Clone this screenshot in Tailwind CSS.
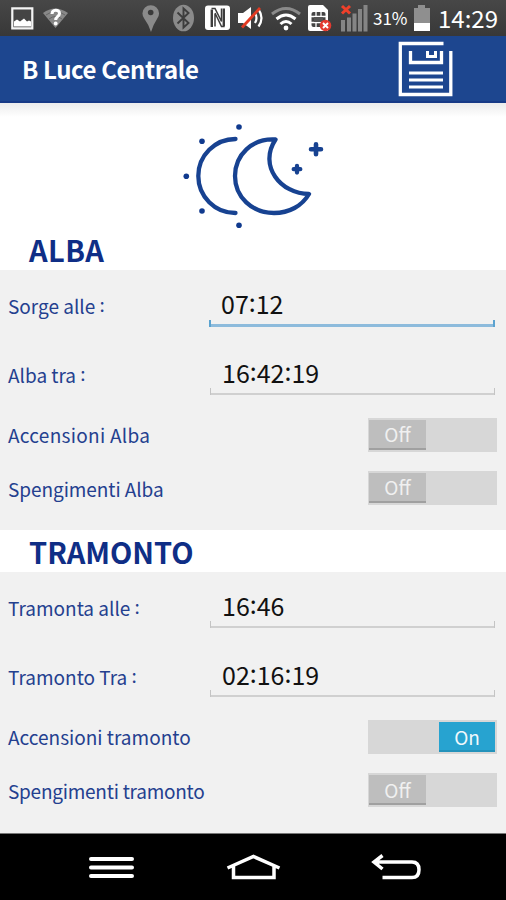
<!DOCTYPE html>
<html lang="it">
<head>
    <meta charset="UTF-8">
    <meta name="viewport" content="width=device-width, initial-scale=1.0">
    <title>B Luce Centrale</title>
    <script src="https://cdn.jsdelivr.net/npm/@tailwindcss/browser@4"></script>
</head>
<body class="flex flex-col w-[506px] h-[900px] overflow-hidden bg-[#f1f1f1] font-['Noto_Sans_CJK_SC','Noto_Sans',sans-serif] text-[#24408f]">

    <!-- Barra di stato -->
    <div class="flex items-center h-9 shrink-0 bg-linear-to-b from-[#474747] to-[#383838] text-white pl-[11px]">
        <svg class="w-[23px] h-9 shrink-0" viewBox="0 0 23 36">
            <path d="M1.3 8.3h20v20h-20z" fill="#444" stroke="#f4f4f4" stroke-width="2.2"/>
            <path d="M3 26.500v-5l3-2 3 2 4-3 3 3 2-1 2 1v5z" fill="#fff"/>
        </svg>
        <svg class="w-[25px] h-9 shrink-0 ml-[9px]" viewBox="0 0 25 36">
            <path d="M0 13Q12 4 25 13L12.500 28z" fill="#888"/>
            <path d="M3 15q9.500-7 19 0M6 19q6.500-5 13 0" fill="none" stroke="#666"/>
            <path d="M9 14c0-5 7.500-5 7.500-.5 0 3-3.800 3-3.800 6.500" fill="none" stroke="#fff" stroke-width="3"/>
            <circle cx="12.700" cy="23.500" r="1.900" fill="#fff"/>
        </svg>
        <svg class="w-[18px] h-9 shrink-0 ml-[74px]" viewBox="0 0 18 36">
            <path d="M9 32Q7 25 2.500 19A8.300 8.300 0 1 1 15 19Q11 25 9 32z" fill="#8a8a8a"/>
            <circle cx="8.700" cy="12.500" r="2.800" fill="#3a3a3a"/>
        </svg>
        <svg class="w-[23px] h-9 shrink-0 ml-3" viewBox="0 0 23 36">
            <ellipse cx="11.500" cy="18" rx="10.500" ry="13.300" fill="#8a8a8a"/>
            <path d="M5.500 12.500L16.500 23l-5 4.500v-19l5 4.500L5.500 23.500" fill="none" stroke="#3d3d3d" stroke-width="1.900"/>
        </svg>
        <svg class="w-[26px] h-9 shrink-0 ml-[10px]" viewBox="0 0 26 36">
            <rect x="0" y="5.500" width="25" height="24.500" rx="3" fill="#fff"/>
            <path d="M6.800 27V9.500M18.800 26V8.500" fill="none" stroke="#3d3d3d" stroke-width="2.400"/>
            <path d="M6.500 8.500h3.500l6.500 13V8.500M10 14v12.500M10 13l6.500 13.500h3.200" fill="none" stroke="#3d3d3d" stroke-width="1.500"/>
        </svg>
        <svg class="w-[28px] h-9 shrink-0 ml-[6px]" viewBox="0 0 28 36">
            <path d="M1 13h5l8-6v22l-8-6H1z" fill="#fff"/>
            <path d="M18 13q3 5 0 10M21.500 9.500q6 8.500 0 17" fill="none" stroke="#fff" stroke-width="2.200"/>
            <path d="M5 27.500L23 8" stroke="#e33a22" stroke-width="2.800"/>
        </svg>
        <svg class="w-[30px] h-9 shrink-0 ml-[6px]" viewBox="0 0 30 36" fill="none" stroke-width="3">
            <path d="M1 14q14-11 28 0" stroke="#8a8a8a"/>
            <path d="M5.500 19q9.500-8 19 0M9.500 24q5.500-5 11 0" stroke="#fff"/>
            <circle cx="15" cy="28" r="2.400" fill="#fff" stroke="none"/>
        </svg>
        <svg class="w-[24px] h-9 shrink-0 ml-[7px]" viewBox="0 0 24 36">
            <path d="M2 5h13l5 5v21H2q-2 0-2-2V7q0-2 2-2z" fill="#fff"/>
            <rect x="3.500" y="12" width="14" height="15" rx="2" fill="#444"/>
            <path d="M3 16.500h15M3 22.500h15M8 12v15M13 12v15" stroke="#fff" stroke-width="1.300"/>
            <rect x="6" y="17" width="9" height="5" fill="#555"/>
            <circle cx="17.500" cy="25.500" r="5.800" fill="#e33a30"/>
            <path d="M15 23l5 5M20 23l-5 5" stroke="#fff" stroke-width="1.900"/>
        </svg>
        <svg class="w-[29px] h-9 shrink-0 ml-2" viewBox="0 0 29 36">
            <path d="M1 20h4v11.500H1zM7 17.500h4v14H7zM12.500 13.500h4v18h-4zM18 9h4v22.500h-4zM23.500 5h4v26.500h-4z" fill="#858585"/>
            <path d="M2 6l8 7.500M10 6l-8 7.500" stroke="#f0402a" stroke-width="3"/>
        </svg>
        <span class="ml-[4px] w-[40px] text-[17px] leading-9">31%</span>
        <svg class="w-[18px] h-9 shrink-0" viewBox="0 0 18 36">
            <path d="M5 5h7v3h5v15H1V8h4z" fill="#8f8f8f"/>
            <path d="M1 23h16v8H1z" fill="#fff"/>
        </svg>
        <span class="ml-[7px] text-[24px] leading-9">14:29</span>
    </div>

    <!-- Titolo -->
    <header class="flex items-center justify-between h-[67px] shrink-0 bg-[#1d468f] border-b-2 border-[#173a86] text-white pl-[22px] pr-[53px]">
        <h1 class="text-[24px] font-bold tracking-[-0.4px]">B Luce Centrale</h1>
        <svg class="w-[55px] h-[56px]" viewBox="0 0 55 56" fill="none" stroke="#fff">
            <path d="M45.500 2.500H2.300v51h50.500V10" stroke-width="3.300"/>
            <path d="M12.500 10v11.500h31V10" stroke-width="3.300"/>
            <path d="M29.500 10v5.500h8V10" stroke-width="3"/>
            <path d="M11 32h34M11 39h34M11 46h34" stroke-width="3"/>
        </svg>
    </header>

    <!-- Luna -->
    <div class="h-[127px] shrink-0 bg-white">
        <div class="h-[14px] bg-linear-to-b from-[#ececec] to-white"></div>
        <svg class="w-[146px] h-[113px] ml-[181px]" viewBox="181 117 146 113" fill="none" stroke="#174291" stroke-width="4.300" stroke-linecap="round" stroke-linejoin="round">
            <path d="M235.500 139A37.200 37 0 0 0 235.500 213"/>
            <path d="M275.500 139.500C252 138 235 155 235 176C235 197 252 213 274 213C289 213 302 206 309 194C281 194 258 166 275.500 139.500z"/>
            <path d="M316 144.200v10M311 149.200h10" stroke-width="4.600"/>
            <path d="M297 166v6.500M293.700 169.200h6.600" stroke-width="4.300"/>
            <g fill="#103a8e" stroke="none">
                <circle cx="239" cy="127" r="2.800"/>
                <circle cx="202" cy="141.300" r="2.800"/>
                <circle cx="186.300" cy="176.300" r="2.800"/>
                <circle cx="202" cy="211" r="2.800"/>
                <circle cx="239" cy="225.300" r="2.800"/>
            </g>
        </svg>
    </div>

    <!-- Alba -->
    <section class="shrink-0">
        <h2 class="h-10 bg-white pl-[29px] text-[29px] leading-[38px] font-bold tracking-[0.4px] text-[#0f2e86]">ALBA</h2>
        <div class="h-[260px] pl-2 pr-[9px] text-[19px]">
            <div class="flex justify-between h-[69px]">
                <span class="leading-[72px]">Sorge alle <span class="relative -top-0.5">:</span></span>
                <div class="relative w-[286px] h-[57px] mr-[2px] border-b-[3px] border-[#8dbbdc] pl-3 text-[25px] leading-[66px] text-[#111]">07<span class="relative -top-0.5">:</span>12
                    <i class="absolute left-0 bottom-[-3px] w-[2px] h-[7px] bg-[#5ba3d0]"></i>
                    <i class="absolute right-0 bottom-[-3px] w-[2px] h-[7px] bg-[#5ba3d0]"></i>
                </div>
            </div>
            <div class="flex justify-between h-[69px]">
                <span class="leading-[72px]">Alba tra <span class="relative -top-0.5">:</span></span>
                <div class="relative w-[285px] h-[56px] mr-[2px] border-b-2 border-[#d0d0d0] pl-3 text-[25px] leading-[66px] text-[#111]">16<span class="relative -top-0.5">:</span>42<span class="relative -top-0.5">:</span>19
                    <i class="absolute left-0 bottom-[-2px] w-px h-[7px] bg-[#c4c4c4]"></i>
                    <i class="absolute right-0 bottom-[-2px] w-px h-[7px] bg-[#c4c4c4]"></i>
                </div>
            </div>
            <div class="flex items-center justify-between h-[53px]">
                <span class="pt-0.5 tracking-[0.28px]">Accensioni Alba</span>
                <div class="w-[129px] h-[34px] bg-[#d7d7d7] p-[2px] pl-px">
                    <div class="w-[57px] h-[30px] bg-[#bebebe] border-b-2 border-[#a0a0a0] text-center text-[19px] leading-[27px] text-[#f0f0f0]">Off</div>
                </div>
            </div>
            <div class="flex items-center justify-between h-[54px]">
                <span class="pt-0.5 tracking-[-0.06px]">Spengimenti Alba</span>
                <div class="w-[129px] h-[34px] bg-[#d7d7d7] p-[2px] pl-px">
                    <div class="w-[57px] h-[30px] bg-[#bebebe] border-b-2 border-[#a0a0a0] text-center text-[19px] leading-[27px] text-[#f0f0f0]">Off</div>
                </div>
            </div>
        </div>
    </section>

    <!-- Tramonto -->
    <section class="shrink-0">
        <h2 class="h-[42px] bg-white pl-[29px] text-[29px] leading-[42px] font-bold text-[#0f2e86]">TRAMONTO</h2>
        <div class="h-[261px] pl-2 pr-[9px] text-[19px]">
            <div class="flex justify-between h-[69px]">
                <span class="leading-[72px]">Tramonta alle <span class="relative -top-0.5">:</span></span>
                <div class="relative w-[285px] h-[56px] mr-[2px] border-b-2 border-[#d0d0d0] pl-3 text-[25px] leading-[66px] text-[#111]">16<span class="relative -top-0.5">:</span>46
                    <i class="absolute left-0 bottom-[-2px] w-px h-[7px] bg-[#c4c4c4]"></i>
                    <i class="absolute right-0 bottom-[-2px] w-px h-[7px] bg-[#c4c4c4]"></i>
                </div>
            </div>
            <div class="flex justify-between h-[69px]">
                <span class="leading-[72px]">Tramonto Tra <span class="relative -top-0.5">:</span></span>
                <div class="relative w-[285px] h-[56px] mr-[2px] border-b-2 border-[#d0d0d0] pl-3 text-[25px] leading-[66px] text-[#111]">02<span class="relative -top-0.5">:</span>16<span class="relative -top-0.5">:</span>19
                    <i class="absolute left-0 bottom-[-2px] w-px h-[7px] bg-[#c4c4c4]"></i>
                    <i class="absolute right-0 bottom-[-2px] w-px h-[7px] bg-[#c4c4c4]"></i>
                </div>
            </div>
            <div class="flex items-center justify-between h-[53px]">
                <span class="pt-0.5">Accensioni tramonto</span>
                <div class="flex justify-end w-[129px] h-[34px] bg-[#d7d7d7] p-[2px]">
                    <div class="w-[56px] h-[30px] bg-[#27a3d0] border-b-2 border-[#2392bb] text-center text-[19px] leading-[29px] text-[#f0f8fc]">On</div>
                </div>
            </div>
            <div class="flex items-center justify-between h-[54px]">
                <span class="pt-0.5 tracking-[-0.24px]">Spengimenti tramonto</span>
                <div class="w-[129px] h-[34px] bg-[#d7d7d7] p-[2px] pl-px">
                    <div class="w-[57px] h-[30px] bg-[#bebebe] border-b-2 border-[#a0a0a0] text-center text-[19px] leading-[29px] text-[#f0f0f0]">Off</div>
                </div>
            </div>
        </div>
    </section>

    <!-- Tasti di navigazione -->
    <nav class="flex h-[67px] shrink-0 bg-black border-t border-[#777] pl-[89px]">
        <svg class="w-[45px] h-[66px]" viewBox="89 834 45 66" stroke="#fff" stroke-width="4" stroke-linecap="round">
            <path d="M91 859h41M91 867.500h41M91 876h41"/>
        </svg>
        <svg class="w-[56px] h-[66px] ml-[92px]" viewBox="226 834 56 66" fill="none" stroke="#fff" stroke-width="3.500">
            <path d="M227.500 868l26-11.500 26 11.500M233.500 866v11.500h40.500V866"/>
        </svg>
        <svg class="w-[52px] h-[66px] ml-[89px]" viewBox="371 834 52 66" fill="none" stroke="#fff" stroke-width="3.500">
            <path d="M382.500 855.500l-8.500 6.500 8.500 7M374 862h38q7 0 7 7.800t-7 7.800h-29.500"/>
        </svg>
    </nav>

</body>
</html>
